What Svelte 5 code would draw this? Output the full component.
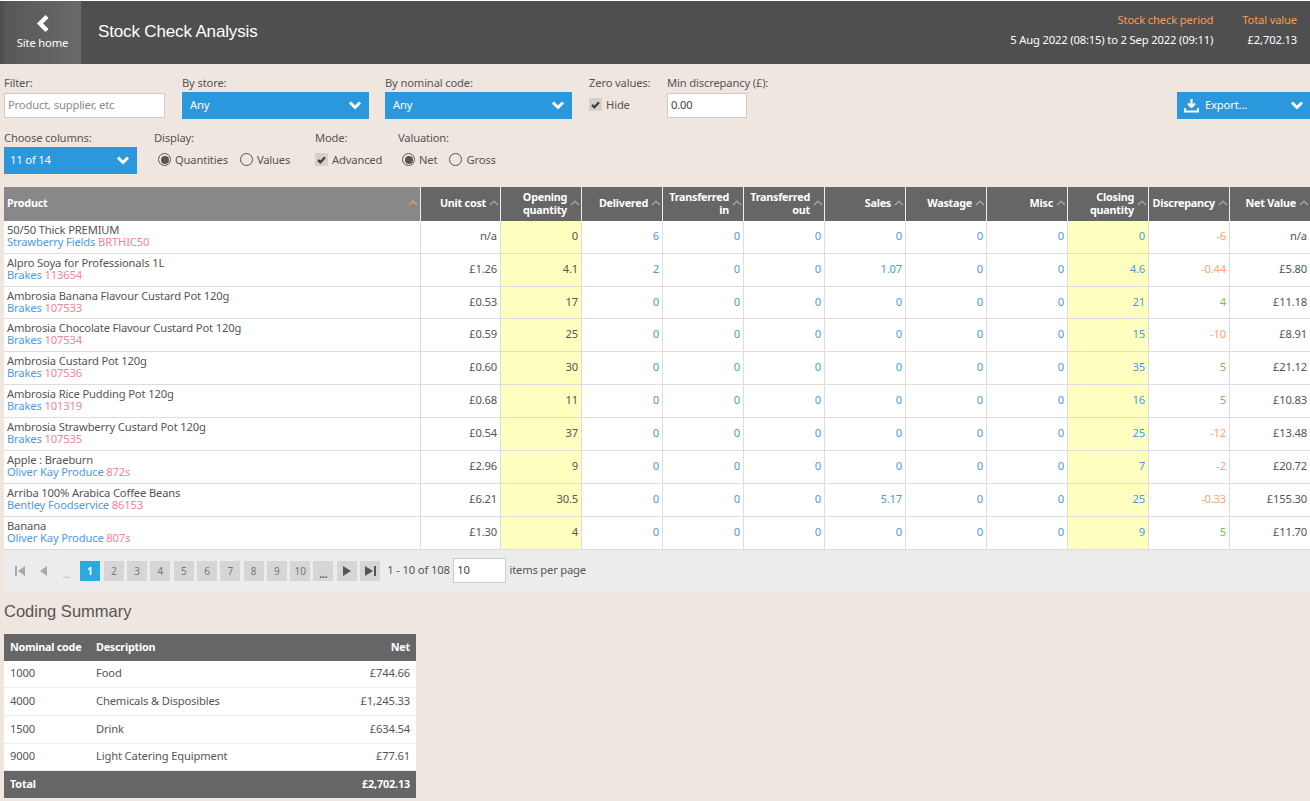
<script>
  const cols = [
    ['Unit cost'], ['Opening', 'quantity'], ['Delivered'], ['Transferred', 'in'], ['Transferred', 'out'],
    ['Sales'], ['Wastage'], ['Misc'], ['Closing', 'quantity'], ['Discrepancy'], ['Net Value']
  ];
  const rows = [
    ['50/50 Thick PREMIUM', 'Strawberry Fields', 'BRTHIC50', 'n/a', '0', '6', '0', '0', '0', '0', '0', '0', '-6', 'n/a'],
    ['Alpro Soya for Professionals 1L', 'Brakes', '113654', '£1.26', '4.1', '2', '0', '0', '1.07', '0', '0', '4.6', '-0.44', '£5.80'],
    ['Ambrosia Banana Flavour Custard Pot 120g', 'Brakes', '107533', '£0.53', '17', '0', '0', '0', '0', '0', '0', '21', '4', '£11.18'],
    ['Ambrosia Chocolate Flavour Custard Pot 120g', 'Brakes', '107534', '£0.59', '25', '0', '0', '0', '0', '0', '0', '15', '-10', '£8.91'],
    ['Ambrosia Custard Pot 120g', 'Brakes', '107536', '£0.60', '30', '0', '0', '0', '0', '0', '0', '35', '5', '£21.12'],
    ['Ambrosia Rice Pudding Pot 120g', 'Brakes', '101319', '£0.68', '11', '0', '0', '0', '0', '0', '0', '16', '5', '£10.83'],
    ['Ambrosia Strawberry Custard Pot 120g', 'Brakes', '107535', '£0.54', '37', '0', '0', '0', '0', '0', '0', '25', '-12', '£13.48'],
    ['Apple : Braeburn', 'Oliver Kay Produce', '872s', '£2.96', '9', '0', '0', '0', '0', '0', '0', '7', '-2', '£20.72'],
    ['Arriba 100% Arabica Coffee Beans', 'Bentley Foodservice', '86153', '£6.21', '30.5', '0', '0', '0', '5.17', '0', '0', '25', '-0.33', '£155.30'],
    ['Banana', 'Oliver Kay Produce', '807s', '£1.30', '4', '0', '0', '0', '0', '0', '0', '9', '5', '£11.70']
  ];
  const coding = [
    ['1000', 'Food', '£744.66'],
    ['4000', 'Chemicals & Disposibles', '£1,245.33'],
    ['1500', 'Drink', '£634.54'],
    ['9000', 'Light Catering Equipment', '£77.61']
  ];
  const pages = ['2', '3', '4', '5', '6', '7', '8', '9', '10', '...'];
  const cellClass = (i, v) => {
    if (i === 0 || i === 10) return 'plain';
    if (i === 1) return 'plain yellow';
    if (i === 8) return 'qty yellow';
    if (i === 9) return v.startsWith('-') ? 'neg' : 'pos';
    return 'qty';
  };
</script>

{#snippet chevron()}
  <svg class="chev" width="14" height="9" viewBox="0 0 14 9"><path d="M2 1.5 7 6.5 12 1.5" fill="none" stroke="#fff" stroke-width="3"/></svg>
{/snippet}
{#snippet caret()}
  <svg class="caret" width="10" height="6" viewBox="0 0 10 6"><path d="M1 5 5 1.2 9 5" fill="none" stroke="currentColor" stroke-width="1.4"/></svg>
{/snippet}
{#snippet check()}
  <span class="check"><svg width="9" height="8" viewBox="0 0 9 8"><path d="M1 4 3.4 6.2 8 1.2" fill="none" stroke="#444" stroke-width="2.4"/></svg></span>
{/snippet}

<div class="page">
  <header class="top">
    <a class="home" href="#home">
      <svg width="14" height="19" viewBox="0 0 14 19"><path d="M11 2.5 4 9.5 11 16.5" fill="none" stroke="#fff" stroke-width="4.4"/></svg>
      <span>Site home</span>
    </a>
    <h1>Stock Check Analysis</h1>
    <div class="summary">
      <div class="sumcol"><b>Stock check period</b><span>5 Aug 2022 (08:15) to 2 Sep 2022 (09:11)</span></div>
      <div class="sumcol"><b>Total value</b><span>£2,702.13</span></div>
    </div>
  </header>

  <section class="filters">
    <div class="frow one">
      <div class="field f-filter"><label for="flt">Filter:</label><input id="flt" class="box" placeholder="Product, supplier, etc" /></div>
      <div class="field f-store"><span class="lab">By store:</span><div class="sel"><span>Any</span>{@render chevron()}</div></div>
      <div class="field f-nom"><span class="lab">By nominal code:</span><div class="sel"><span>Any</span>{@render chevron()}</div></div>
      <div class="field f-zero"><span class="lab">Zero values:</span><div class="opt tall">{@render check()}<span>Hide</span></div></div>
      <div class="field f-min"><label for="mind">Min discrepancy (£):</label><input id="mind" class="box val" value="0.00" /></div>
      <div class="sel export">
        <svg width="15" height="15" viewBox="0 0 15 15"><path d="M7.5 1v7M4 5.5l3.5 3.5L11 5.5" fill="none" stroke="#fff" stroke-width="2.2"/><path d="M1 10v3.5h13V10" fill="none" stroke="#fff" stroke-width="1.8"/></svg>
        <span>Export...</span>{@render chevron()}
      </div>
    </div>
    <div class="frow two">
      <div class="field f-cols"><span class="lab">Choose columns:</span><div class="sel"><span>11 of 14</span>{@render chevron()}</div></div>
      <div class="field f-disp"><span class="lab">Display:</span>
        <div class="opts"><div class="opt"><span class="radio on"></span><span>Quantities</span></div><div class="opt"><span class="radio"></span><span>Values</span></div></div>
      </div>
      <div class="field f-mode"><span class="lab">Mode:</span><div class="opts"><div class="opt">{@render check()}<span>Advanced</span></div></div></div>
      <div class="field f-val"><span class="lab">Valuation:</span>
        <div class="opts"><div class="opt"><span class="radio on"></span><span>Net</span></div><div class="opt"><span class="radio"></span><span>Gross</span></div></div>
      </div>
    </div>
  </section>

  <div class="grid head">
    <div class="th prod"><span>Product</span>{@render caret()}</div>
    {#each cols as c}
      <div class="th"><span class="thl">{#each c as l}<span>{l}</span>{/each}</span>{@render caret()}</div>
    {/each}
  </div>
  {#each rows as r, n}
    <div class="grid row" class:short={n === 2}>
      <div class="td prodc"><span class="nm">{r[0]}</span><span class="sub"><em>{r[1]}</em> <i>{r[2]}</i></span></div>
      {#each r.slice(3) as v, i}
        <div class="td {cellClass(i, v)}">{v}</div>
      {/each}
    </div>
  {/each}

  <div class="pager">
    <span class="pg off"><svg width="10" height="10" viewBox="0 0 10 10"><path d="M0 0h2v10H0zM10 0v10L3 5z" fill="#aaa"/></svg></span>
    <span class="pg off"><svg width="9" height="10" viewBox="0 0 9 10"><path d="M8 0v10L1 5z" fill="#aaa"/></svg></span>
    <span class="pg off dots">...</span>
    <span class="pg cur">1</span>
    {#each pages as p}<span class="pg" class:bold={p === '...'}>{p}</span>{/each}
    <span class="pg"><svg width="10" height="10" viewBox="0 0 10 10"><path d="M1 0v10l8-5z" fill="#555"/></svg></span>
    <span class="pg"><svg width="11" height="10" viewBox="0 0 11 10"><path d="M0 0v10l8-5zM9 0h2v10H9z" fill="#555"/></svg></span>
    <span class="count">1 - 10 of 108</span>
    <input class="box per" value="10" aria-label="items per page" />
    <span class="perl">items per page</span>
  </div>

  <h2>Coding Summary</h2>
  <table class="coding">
    <thead><tr><th class="c1">Nominal code</th><th>Description</th><th class="r">Net</th></tr></thead>
    <tbody>
      {#each coding as c}<tr><td>{c[0]}</td><td>{c[1]}</td><td class="r">{c[2]}</td></tr>{/each}
    </tbody>
    <tfoot><tr><td colspan="2">Total</td><td class="r">£2,702.13</td></tr></tfoot>
  </table>
</div>

<style>
  :global(body) { margin: 0; background: #efe6e0; }
  .page { font: 11.2px/14px "Noto Sans", sans-serif; letter-spacing: -0.15px; color: #555; height: 801px; overflow: hidden; padding-top: 1px; box-sizing: border-box; background: linear-gradient(#fff 1px, #efe6e0 1px); }
  .top { height: 63px; background: #4f4f4f; padding-left: 4px; display: flex; align-items: stretch; color: #fff; }
  .home { width: 77px; background: linear-gradient(90deg, #575757, #6a6a6a); color: #fff; text-decoration: none; display: flex; flex-direction: column; align-items: center; padding-top: 13px; box-sizing: border-box; gap: 3px; }
  h1 { margin: 0 0 0 17px; font: 400 17px/61px "Liberation Sans", sans-serif; letter-spacing: -0.15px; }
  .summary { margin-left: auto; display: flex; gap: 29px; padding: 12px 13px 0 0; }
  .sumcol { display: flex; flex-direction: column; align-items: flex-end; gap: 6px; }
  .sumcol b { font-weight: 400; color: #f79b4f; }

  .filters { padding: 12px 0 0 4px; height: 123px; box-sizing: border-box; }
  .frow { display: flex; align-items: flex-start; }
  .frow.one { height: 55px; }
  .field { display: flex; flex-direction: column; }
  .lab, label { height: 17px; display: block; white-space: nowrap; }
  .box { box-sizing: border-box; height: 25px; border: 1px solid #ccc; background: #fff; padding: 0 3px 2px; margin: 0; font: inherit; letter-spacing: inherit; color: #555; outline: none; border-radius: 0; }
  .box::placeholder { color: #8a8a8a; opacity: 1; }
  .val { color: #444; width: 80px; }
  .f-filter { width: 161px; margin-right: 17px; }
  .f-filter input { width: 161px; }
  .f-store { width: 187px; margin-right: 16px; }
  .f-nom { width: 187px; margin-right: 17px; }
  .f-zero { width: 78px; }
  .f-min { width: 100px; }
  .f-cols { width: 133px; margin-right: 17px; }
  .f-disp { width: 161px; }
  .f-mode { width: 83px; }
  .f-val { width: 120px; }
  .sel { height: 27px; background: #2b98dd; color: #fff; display: flex; align-items: center; justify-content: space-between; padding: 0 7px 1px 8px; margin-top: -1px; box-sizing: border-box; }
  .f-cols .sel { padding-left: 6px; }
  .chev { display: block; }
  .export { margin: 16px 0 0 auto; width: 133px; justify-content: flex-start; gap: 6px; padding-left: 7px; }
  .export .chev { margin-left: auto; margin-right: -1px; }
  .opts { display: flex; gap: 12px; height: 23px; align-items: center; padding-left: 4px; }
  .f-mode .opts { padding-left: 0; }
  .opt { display: flex; align-items: center; gap: 4px; }
  .opt.tall { height: 23px; }
  .check { width: 13px; height: 13px; background: #d8cfc9; display: flex; align-items: center; justify-content: center; }
  .radio { width: 13px; height: 13px; border: 1.5px solid #555; border-radius: 50%; box-sizing: border-box; display: block; position: relative; margin-right: 0; }
  .radio.on::after { content: ""; position: absolute; inset: 1.5px; background: #555; border-radius: 50%; }

  .grid { display: grid; grid-template-columns: 417px 80px repeat(9, 81px) 80px; margin-left: 4px; }
  .head { height: 34px; }
  .th { background: #666; color: #fff; font-weight: 700; font-size: 10.8px; letter-spacing: -0.25px; line-height: 13px; display: flex; align-items: center; justify-content: flex-end; gap: 3px; padding: 0 1px 3px 3px; border-right: 1px solid #eee; box-sizing: border-box; text-align: right; }
  .th:last-child { border-right: 0; }
  .th .caret { flex: none; color: #a5a5a5; }
  .thl { display: flex; flex-direction: column; align-items: flex-end; }
  .prod { background: #888; justify-content: space-between; padding-right: 2px; }
  .prod .caret { color: #f79b4f; }
  .row { height: 33px; background: #fff; }
  .row.short { height: 32px; }
  .td { border-right: 1px solid #ddd; border-bottom: 1px solid #ddd; box-sizing: border-box; padding: 0 3px 2px; display: flex; align-items: center; justify-content: flex-end; line-height: 14px; min-width: 0; }
  .td:last-child { border-right: 0; }
  .prodc { flex-direction: column; align-items: flex-start; justify-content: center; line-height: 12px; }
  .nm { color: #555; }
  .sub { white-space: nowrap; }
  .sub em { font-style: normal; color: #4f9be3; }
  .sub i { font-style: normal; color: #f0849a; }
  .yellow { background: #ffffc0; }
  .qty { color: #4a9be0; }
  .neg { color: #f9a56b; }
  .pos { color: #7cbb5c; }

  .pager { margin-left: 4px; height: 41px; background: #ececec; display: flex; align-items: center; gap: 3.3px; padding: 0 0 0 6px; box-sizing: border-box; }
  .pg { width: 20px; height: 20px; background: #d6d6d6; display: flex; align-items: center; justify-content: center; font-size: 10px; color: #777; }
  .pg.off { background: none; color: #aaa; }
  .dots { align-items: flex-end; }
  .cur { background: #29abe2; color: #fff; font-weight: 700; margin-right: 0.6px; }
  .bold { font-weight: 700; color: #555; align-items: flex-end; }
  .count { margin-left: 4px; min-width: 62.5px; padding-bottom: 2px; }
  .perl { padding-bottom: 2px; letter-spacing: -0.18px; }
  .per { width: 53px; height: 25px; color: #444; }

  h2 { margin: 11px 0 0 4px; font: 400 16.5px/18px "Liberation Sans", sans-serif; letter-spacing: 0; color: #555; height: 32px; }
  .coding { margin-left: 4px; width: 412px; border-collapse: separate; border-spacing: 0; table-layout: fixed; }
  .coding th { background: #666; color: #fff; font-weight: 700; font-size: 10.8px; letter-spacing: -0.25px; height: 27px; padding: 0 6px 2px; text-align: left; box-sizing: border-box; white-space: nowrap; }
  .coding th.c1 { width: 86px; }
  .coding th:last-child { width: 100px; }
  .coding td { background: #fff; height: 28px; padding: 0 6px 2px; border-bottom: 1px solid #eee; box-sizing: border-box; }
  .coding tbody tr:first-child td, .coding tbody tr:last-child td { height: 27px; }
  .coding tfoot td { background: #666; color: #fff; font-weight: 700; font-size: 10.8px; height: 27px; border: 0; }
  .coding .r { text-align: right; }
</style>
